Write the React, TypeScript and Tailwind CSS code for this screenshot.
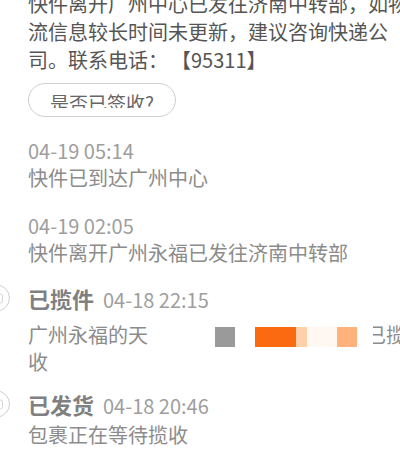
import React from "react"

const font = { fontFamily: '"Noto Sans CJK SC", "Noto Sans", sans-serif' }

function Circle() {
  return (
    <div className="absolute left-[-45px] top-1/2 -translate-y-1/2 w-[27px] h-[27px] rounded-full border-[1.5px] border-[#cfcfcf] bg-white flex items-center justify-center">
      <div className="w-[5px] h-[10px] ml-[8px] rounded-full border border-[#d6d6d6]" />
    </div>
  )
}

export default function App() {
  return (
    <div className="w-[400px] h-[454px] overflow-hidden bg-white" style={font}>
      <div className="pl-[28px] pr-[6px] -mt-[10px]">
        <p className="text-[20px] leading-[28px] text-[#555] whitespace-nowrap">
          快件离开广州中心已发往济南中转部，如物
          <br />
          流信息较长时间未更新，建议咨询快递公
          <br />
          司。联系电话<span className="mr-[13px]">：</span>【95311】
        </p>

        <div className="mt-[9px] w-[148px] h-[34px] rounded-full border border-[#cfcfcf] flex items-center justify-center overflow-hidden">
          <span className="text-[19px] leading-none text-[#666] mt-[5px] [clip-path:inset(0_0_4px_0)]">是否已签收?</span>
        </div>

        <div className="mt-[20px]">
          <div className="text-[20px] leading-[27px] text-[#9e9e9e]">04-19 05:14</div>
          <div className="text-[20px] leading-[27px] text-[#8c8c8c]">快件已到达广州中心</div>
        </div>

        <div className="mt-[21px]">
          <div className="text-[20px] leading-[27px] text-[#9e9e9e]">04-19 02:05</div>
          <div className="text-[20px] leading-[27px] text-[#8c8c8c]">快件离开广州永福已发往济南中转部</div>
        </div>

        <div className="mt-[17px]">
          <div className="relative flex items-baseline gap-[9px] h-[30px]">
            <Circle />
            <span className="text-[22px] leading-[30px] font-semibold text-[#808080]">已揽件</span>
            <span className="text-[20px] leading-[30px] text-[#9e9e9e]">04-18 22:15</span>
          </div>
          <div className="flex items-start mt-[8px]">
            <div className="w-[130px] shrink-0 text-[20px] leading-[27px] text-[#8c8c8c]">广州永福的天收</div>
            <div className="flex items-center shrink-0 ml-[57px] mt-[5px] h-[22px]">
              <div className="w-[20px] h-[20px] bg-[#9a9a9a]" />
              <div className="w-[41px] h-[20px] ml-[20px] bg-[#fb6a10]" />
              <div className="w-[11px] h-[20px] bg-[#ffd0ac]" />
              <div className="w-[30px] h-[20px] bg-[#fff7f1]" />
              <div className="w-[20px] h-[20px] bg-[#ffb27c]" />
              <span className="ml-[9px] -mt-[6px] text-[20px] leading-[27px] text-[#8c8c8c] whitespace-nowrap [clip-path:inset(0_0_0_7px)]">已揽</span>
            </div>
          </div>
        </div>

        <div className="mt-[14px]">
          <div className="relative flex items-baseline gap-[9px] h-[30px]">
            <Circle />
            <span className="text-[22px] leading-[30px] font-semibold text-[#808080]">已发货</span>
            <span className="text-[20px] leading-[30px] text-[#9e9e9e]">04-18 20:46</span>
          </div>
          <div className="mt-[2px] text-[20px] leading-[27px] text-[#8c8c8c]">包裹正在等待揽收</div>
        </div>
      </div>
    </div>
  )
}
